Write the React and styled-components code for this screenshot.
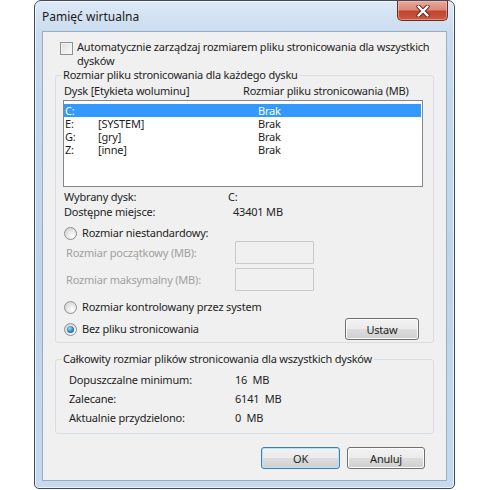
import React from "react";
import styled, { createGlobalStyle, css } from "styled-components";

const GlobalStyle = createGlobalStyle`
  html, body {
    margin: 0;
    padding: 0;
    background: #ffffff;
  }
  body {
    font-family: "Noto Sans", "Open Sans", sans-serif;
    font-size: 11px;
    letter-spacing: -0.2px;
    color: #1e1e1e;
  }
`;

const drives = [
  { letter: "C:", label: "", size: "Brak", selected: true },
  { letter: "E:", label: "[SYSTEM]", size: "Brak" },
  { letter: "G:", label: "[gry]", size: "Brak" },
  { letter: "Z:", label: "[inne]", size: "Brak" },
];

const totals = [
  { label: "Dopuszczalne minimum:", value: "16\u00a0 MB" },
  { label: "Zalecane:", value: "6141\u00a0 MB" },
  { label: "Aktualnie przydzielono:", value: "0\u00a0 MB" },
];

function Radio({ checked, children }) {
  return (
    <RadioLabel>
      <RadioDot checked={checked} />
      <span>{children}</span>
    </RadioLabel>
  );
}

function App() {
  return (
    <>
      <GlobalStyle />
      <Window>
        <TitleBar>
          <Title>Pamięć wirtualna</Title>
          <CloseButton>
            <svg width="14" height="12" viewBox="0 0 14 12">
              <path
                d="M2.5 1.5 L11.5 10.5 M11.5 1.5 L2.5 10.5"
                stroke="#5a2a24"
                strokeWidth="4.2"
                strokeLinecap="round"
              />
              <path
                d="M2.5 1.5 L11.5 10.5 M11.5 1.5 L2.5 10.5"
                stroke="#ffffff"
                strokeWidth="2.4"
                strokeLinecap="round"
              />
            </svg>
          </CloseButton>
        </TitleBar>
        <Client>
          <AutoRow>
            <CheckBox />
            <AutoText>
              Automatycznie zarządzaj rozmiarem pliku stronicowania dla wszystkich
              dysków
            </AutoText>
          </AutoRow>

          <Group>
            <Legend>Rozmiar pliku stronicowania dla każdego dysku</Legend>
            <ColumnHeaders>
              <span>Dysk [Etykieta woluminu]</span>
              <span>Rozmiar pliku stronicowania (MB)</span>
            </ColumnHeaders>
            <DriveList>
              {drives.map((d) => (
                <DriveRow key={d.letter} selected={d.selected}>
                  <DriveLetter>{d.letter}</DriveLetter>
                  <DriveLabel>{d.label}</DriveLabel>
                  <span>{d.size}</span>
                </DriveRow>
              ))}
            </DriveList>

            <InfoGrid>
              <span>Wybrany dysk:</span>
              <span>C:</span>
              <span>Dostępne miejsce:</span>
              <InfoValue>43401 MB</InfoValue>
            </InfoGrid>

            <OptionRow>
              <Radio>Rozmiar niestandardowy:</Radio>
            </OptionRow>
            <SizeRow>
              <DisabledLabel>Rozmiar początkowy (MB):</DisabledLabel>
              <SizeInput disabled />
            </SizeRow>
            <SizeRow second>
              <DisabledLabel>Rozmiar maksymalny (MB):</DisabledLabel>
              <SizeInput disabled />
            </SizeRow>
            <OptionRow spaced>
              <Radio>Rozmiar kontrolowany przez system</Radio>
            </OptionRow>
            <SetRow>
              <Radio checked>Bez pliku stronicowania</Radio>
              <Button width={74}>Ustaw</Button>
            </SetRow>
          </Group>

          <Group totals>
            <Legend totals>Całkowity rozmiar plików stronicowania dla wszystkich dysków</Legend>
            <TotalsGrid>
              {totals.map((t) => (
                <React.Fragment key={t.label}>
                  <span>{t.label}</span>
                  <span>{t.value}</span>
                </React.Fragment>
              ))}
            </TotalsGrid>
          </Group>

          <ButtonBar>
            <Button primary width={79}>OK</Button>
            <Button width={78}>Anuluj</Button>
          </ButtonBar>
        </Client>
      </Window>
    </>
  );
}

const Window = styled.div`
  box-sizing: border-box;
  display: flex;
  flex-direction: column;
  width: 421px;
  height: 489px;
  margin-left: 34px;
  padding: 0 7px 7px 7px;
  border: 1px solid #3f4b5a;
  border-radius: 7px 7px 5px 5px;
  background: linear-gradient(180deg, #dde9f6 0%, #c8dbef 7%, #bed4ec 60%, #c6daef 100%);
  box-shadow: inset 0 0 0 1px rgba(255, 255, 255, 0.65);
`;

const TitleBar = styled.div`
  display: flex;
  justify-content: space-between;
  align-items: flex-start;
  height: 30px;
  flex: 0 0 30px;
`;

const Title = styled.span`
  font-size: 12px;
  letter-spacing: 0;
  color: #1b1b1b;
  margin-top: 8px;
  line-height: 16px;
`;

const CloseButton = styled.div`
  display: flex;
  align-items: center;
  justify-content: center;
  box-sizing: border-box;
  width: 51px;
  height: 20px;
  margin-right: -1px;
  border: 1px solid #6f2b22;
  border-top: none;
  border-radius: 0 0 5px 5px;
  background: linear-gradient(180deg, #e9a99c 0%, #d98a7b 45%, #c4452f 55%, #c95a3f 100%);
  box-shadow: inset 0 0 0 1px rgba(255, 200, 190, 0.5);
`;

const Client = styled.div`
  box-sizing: border-box;
  flex: 1;
  display: flex;
  flex-direction: column;
  padding: 8px 12px 0 12px;
  border: 1px solid #9aacc1;
  background: #f0f0f0;
`;

const AutoRow = styled.label`
  display: flex;
  align-items: flex-start;
  gap: 4px;
  padding-left: 5px;
`;

const CheckBox = styled.span`
  box-sizing: border-box;
  flex: 0 0 13px;
  width: 13px;
  height: 13px;
  margin-top: 2px;
  border: 1px solid #8e8f8f;
  background: linear-gradient(135deg, #dcdcdc 0%, #ececec 50%, #fcfcfc 100%);
  box-shadow: inset 0 0 0 1px #f4f4f4;
`;

const AutoText = styled.span`
  line-height: 14px;
`;

const Group = styled.fieldset`
  box-sizing: border-box;
  margin: ${(p) => (p.totals ? "9px 0 0 0" : "0")};
  padding: ${(p) => (p.totals ? "4px 10px 6px 10px" : "2px 10px 2px 7px")};
  border: 1px solid #d5dfe5;
  border-radius: 3px;
  min-width: 0;
`;

const Legend = styled.legend`
  padding: 0 2px 0 1px;
  margin-left: ${(p) => (p.totals ? "-4px" : "-1px")};
  line-height: 14px;
`;

const ColumnHeaders = styled.div`
  display: flex;
  line-height: 14px;
  padding-left: 1px;
  margin-bottom: 2px;

  & > span:first-child {
    width: 179px;
  }
`;

const DriveList = styled.div`
  box-sizing: border-box;
  height: 87px;
  padding: 3px 1px 0 0;
  border: 1px solid #828790;
  background: #ffffff;
`;

const DriveRow = styled.div`
  display: flex;
  height: 13px;
  line-height: 13px;
  padding-left: 1px;
  ${(p) =>
    p.selected &&
    css`
      background: #3399ff;
      color: #ffffff;
    `}
`;

const DriveLetter = styled.span`
  width: 33px;
`;

const DriveLabel = styled.span`
  width: 160px;
`;

const InfoGrid = styled.div`
  display: grid;
  grid-template-columns: 164px auto;
  row-gap: 1px;
  margin-top: 3px;
  padding-left: 1px;
  line-height: 14px;
`;

const InfoValue = styled.span`
  margin-left: 5px;
`;

const OptionRow = styled.div`
  display: flex;
  margin-top: ${(p) => (p.spaced ? "9px" : "7px")};
  padding-left: 1px;
`;

const RadioLabel = styled.label`
  display: flex;
  align-items: center;
  gap: 5px;
  line-height: 14px;
`;

const RadioDot = styled.span`
  box-sizing: border-box;
  position: relative;
  width: 13px;
  height: 13px;
  border-radius: 50%;
  border: 1px solid #8e8f8f;
  background: radial-gradient(circle at 65% 70%, #ffffff 0%, #e2e2e2 55%, #cfcfcf 100%);

  ${(p) =>
    p.checked &&
    css`
      &::after {
        content: "";
        position: absolute;
        left: 2px;
        top: 2px;
        width: 7px;
        height: 7px;
        border-radius: 50%;
        background: radial-gradient(circle at 40% 35%, #a8e0f8 0%, #3a8fc8 45%, #0b4d80 100%);
      }
    `}
`;

const SizeRow = styled.div`
  display: flex;
  align-items: center;
  margin-top: ${(p) => (p.second ? "4px" : "1px")};
  padding-left: 3px;
`;

const DisabledLabel = styled.span`
  width: 169px;
  color: #a0a0a0;
`;

const SizeInput = styled.input`
  box-sizing: border-box;
  width: 79px;
  height: 23px;
  margin: 0;
  border: 1px solid #c9c9c9;
  border-radius: 1px;
  background: #f0f0f0;
`;

const SetRow = styled.div`
  display: flex;
  align-items: center;
  justify-content: space-between;
  margin-top: 4px;
  padding: 0 4px 0 1px;
`;

const Button = styled.button`
  box-sizing: border-box;
  width: ${(p) => p.width}px;
  height: 22px;
  padding: 0;
  font-family: "Noto Sans", "Open Sans", sans-serif;
  font-size: 11px;
  letter-spacing: -0.2px;
  color: #1e1e1e;
  border: 1px solid ${(p) => (p.primary ? "#3c7fb1" : "#707070")};
  border-radius: 3px;
  background: linear-gradient(180deg, #f2f2f2 0%, #ebebeb 48%, #dddddd 52%, #cfcfcf 100%);
  box-shadow: inset 0 0 0 1px ${(p) => (p.primary ? "#b8e2f9" : "#fbfbfb")};
`;

const TotalsGrid = styled.div`
  display: grid;
  grid-template-columns: 166px auto;
  grid-auto-rows: 19px;
  align-items: center;
  padding-left: 3px;
`;

const ButtonBar = styled.div`
  display: flex;
  justify-content: flex-end;
  gap: 7px;
  margin-top: 13px;
  padding-right: 9px;
`;

export default App;
